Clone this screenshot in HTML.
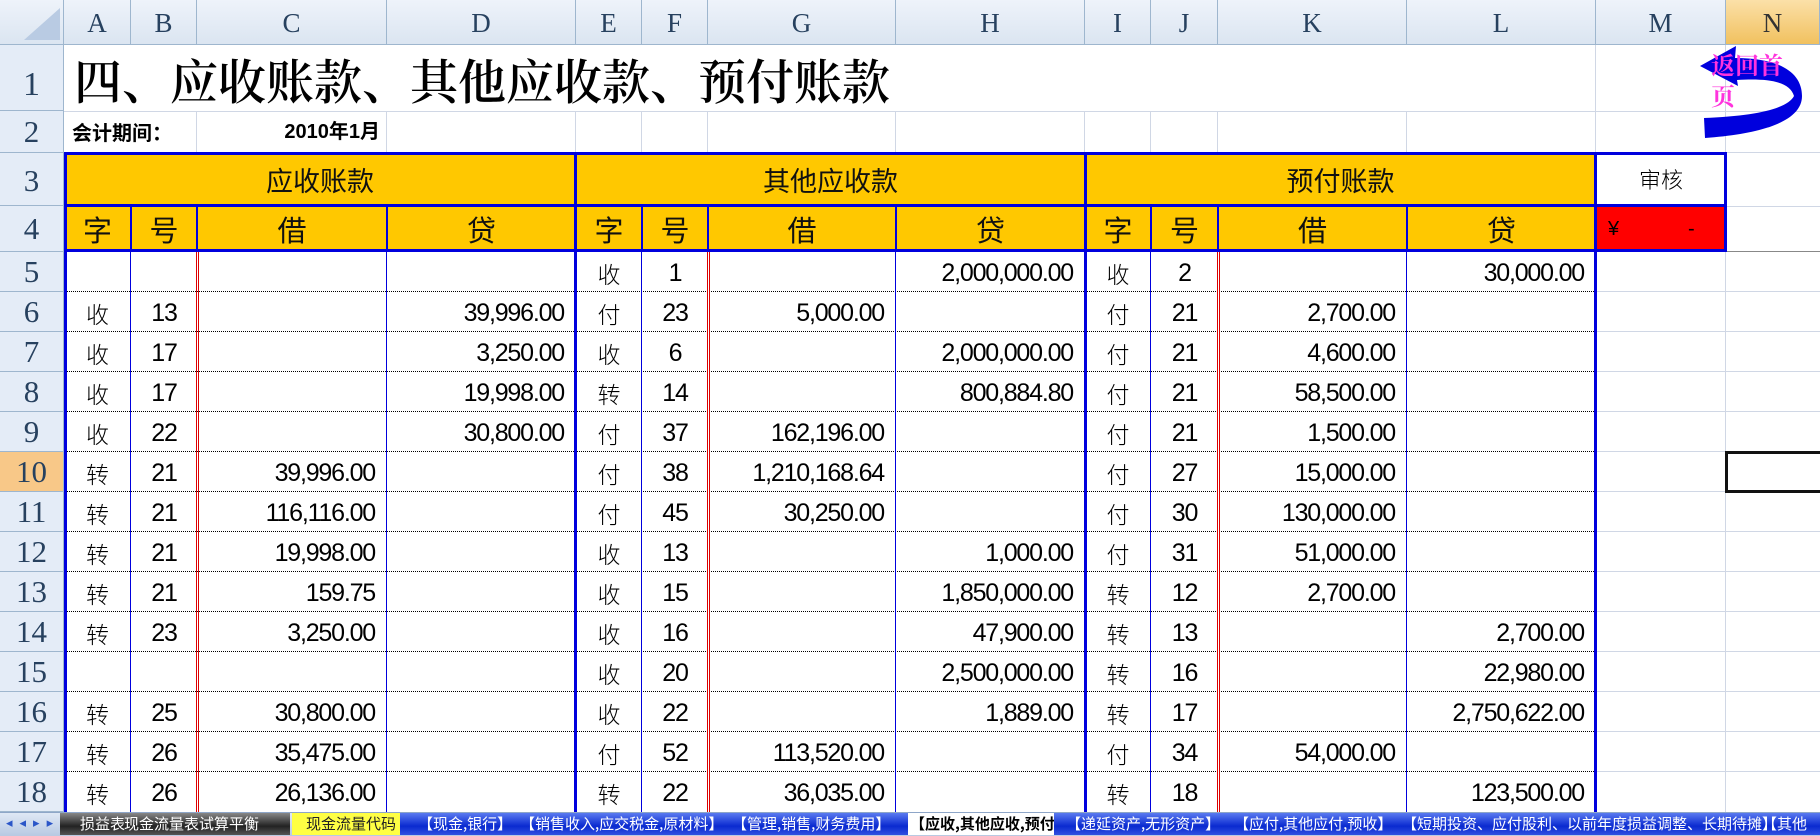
<!DOCTYPE html>
<html><head><meta charset="utf-8"><style>
*{margin:0;padding:0;box-sizing:border-box}
body{width:1820px;height:836px;overflow:hidden;background:#fff;position:relative;font-family:"Liberation Sans","Noto Sans CJK SC",sans-serif}
.a{position:absolute}
.ch{position:absolute;top:0;height:45px;background:linear-gradient(#eef3fa,#dbe5f1);border-right:1px solid #9eb6ce;border-bottom:1px solid #9eb6ce;font-family:"Liberation Serif",serif;font-size:27px;color:#27415f;text-align:center;line-height:47px}
.rh{position:absolute;left:0;width:64px;background:#e4ecf7;border-bottom:1px solid #9eb6ce;border-right:1px solid #9eb6ce;font-family:"Liberation Serif",serif;font-size:31px;color:#27415f;text-align:center}
.gv{position:absolute;width:1px;background:#d0d7e5}
.gh{position:absolute;height:1px;background:#d0d7e5}
.bt{position:absolute;background:#0000dd}
.dot{position:absolute;left:64px;width:1532px;height:0;border-top:1px dotted #000}
.dt{position:absolute;left:64px;top:252px;width:1532px}
.r{position:relative;height:40px;display:flex}
.r div{height:40px;line-height:42px;overflow:hidden;white-space:nowrap}
.c{text-align:center;font-family:"Noto Sans CJK SC",sans-serif;font-size:23px;font-weight:300}
.b{text-align:center;font-family:"Liberation Sans",sans-serif;font-size:25px;letter-spacing:-1.2px}
.n{text-align:right;padding-right:12px;font-family:"Liberation Sans",sans-serif;font-size:25px;letter-spacing:-1.2px}
.w1{width:67px}.w2{width:66px}.w3{width:190px}.w4{width:189px}.w7{width:188px}
.hd{position:absolute;background:#ffc800;text-align:center;font-family:"Noto Sans CJK SC",sans-serif;color:#111}
.tab{position:absolute;top:813px;height:21px;font-size:15px;line-height:21px;white-space:nowrap;font-family:"Noto Sans CJK SC",sans-serif}
</style></head><body>

<div class="ch" style="left:0;width:64px;background:linear-gradient(#eef3fa,#dbe5f1)"></div>
<svg class="a" style="left:20px;top:6px" width="42" height="36"><polygon points="40,2 40,34 4,34" fill="#b9cbe3"/></svg>
<div class="ch" style="left:64px;width:67px">A</div>
<div class="ch" style="left:131px;width:66px">B</div>
<div class="ch" style="left:197px;width:190px">C</div>
<div class="ch" style="left:387px;width:189px">D</div>
<div class="ch" style="left:576px;width:66px">E</div>
<div class="ch" style="left:642px;width:66px">F</div>
<div class="ch" style="left:708px;width:188px">G</div>
<div class="ch" style="left:896px;width:189px">H</div>
<div class="ch" style="left:1085px;width:66px">I</div>
<div class="ch" style="left:1151px;width:67px">J</div>
<div class="ch" style="left:1218px;width:189px">K</div>
<div class="ch" style="left:1407px;width:189px">L</div>
<div class="ch" style="left:1596px;width:130px">M</div>
<div class="ch" style="left:1726px;width:94px;background:linear-gradient(#fbe0a8,#f1c15f);color:#333">N</div>

<div class="rh" style="top:45px;height:66px;line-height:80px;font-size:34px">1</div>
<div class="rh" style="top:111px;height:42px;line-height:42px">2</div>
<div class="rh" style="top:153px;height:53px;line-height:55px">3</div>
<div class="rh" style="top:206px;height:46px;line-height:46px">4</div>
<div class="rh" style="top:252px;height:40px;line-height:40px">5</div>
<div class="rh" style="top:292px;height:40px;line-height:40px">6</div>
<div class="rh" style="top:332px;height:40px;line-height:40px">7</div>
<div class="rh" style="top:372px;height:40px;line-height:40px">8</div>
<div class="rh" style="top:412px;height:40px;line-height:40px">9</div>
<div class="rh" style="top:452px;height:40px;line-height:40px;background:#f8c888">10</div>
<div class="rh" style="top:492px;height:40px;line-height:40px">11</div>
<div class="rh" style="top:532px;height:40px;line-height:40px">12</div>
<div class="rh" style="top:572px;height:40px;line-height:40px">13</div>
<div class="rh" style="top:612px;height:40px;line-height:40px">14</div>
<div class="rh" style="top:652px;height:40px;line-height:40px">15</div>
<div class="rh" style="top:692px;height:40px;line-height:40px">16</div>
<div class="rh" style="top:732px;height:40px;line-height:40px">17</div>
<div class="rh" style="top:772px;height:40px;line-height:40px">18</div>

<div class="gh" style="left:64px;top:111px;width:1756px"></div>
<div class="gh" style="left:64px;top:152px;width:1756px"></div>
<div class="gv" style="left:1595px;top:45px;height:108px"></div>
<div class="gv" style="left:1725px;top:45px;height:767px"></div>
<div class="gv" style="left:196px;top:111px;height:42px"></div>
<div class="gv" style="left:386px;top:111px;height:42px"></div>
<div class="gv" style="left:575px;top:111px;height:42px"></div>
<div class="gv" style="left:641px;top:111px;height:42px"></div>
<div class="gv" style="left:707px;top:111px;height:42px"></div>
<div class="gv" style="left:895px;top:111px;height:42px"></div>
<div class="gv" style="left:1084px;top:111px;height:42px"></div>
<div class="gv" style="left:1150px;top:111px;height:42px"></div>
<div class="gv" style="left:1217px;top:111px;height:42px"></div>
<div class="gv" style="left:1406px;top:111px;height:42px"></div>
<div class="gh" style="left:1726px;top:206px;width:94px"></div>
<div class="gh" style="left:1726px;top:251px;width:94px;background:#888"></div>
<div class="gh" style="left:1596px;top:291px;width:224px"></div>
<div class="gh" style="left:1596px;top:331px;width:224px"></div>
<div class="gh" style="left:1596px;top:371px;width:224px"></div>
<div class="gh" style="left:1596px;top:411px;width:224px"></div>
<div class="gh" style="left:1596px;top:451px;width:224px"></div>
<div class="gh" style="left:1596px;top:491px;width:224px"></div>
<div class="gh" style="left:1596px;top:531px;width:224px"></div>
<div class="gh" style="left:1596px;top:571px;width:224px"></div>
<div class="gh" style="left:1596px;top:611px;width:224px"></div>
<div class="gh" style="left:1596px;top:651px;width:224px"></div>
<div class="gh" style="left:1596px;top:691px;width:224px"></div>
<div class="gh" style="left:1596px;top:731px;width:224px"></div>
<div class="gh" style="left:1596px;top:771px;width:224px"></div>

<div class="a" style="left:74px;top:46px;font-family:'Noto Serif CJK SC',serif;font-weight:600;font-size:48px;line-height:66px;white-space:nowrap">四、应收账款、其他应收款、预付账款</div>
<div class="a" style="left:72px;top:116px;font-family:'Noto Sans CJK SC',sans-serif;font-weight:700;font-size:20px;line-height:32px">会计期间：</div>
<div class="a" style="left:200px;top:116px;width:180px;text-align:right;font-family:'Liberation Sans','Noto Sans CJK SC',sans-serif;font-weight:700;font-size:20px;line-height:32px">2010年1月</div>

<svg class="a" style="left:0;top:0" width="1820" height="160">
<path d="M1700,66 L1736,46 L1735,58 C1782,58 1802,74 1802,96 C1802,122 1760,134 1705,138 L1704,118 C1758,116 1788,108 1794,96 C1790,82 1770,78 1737,80 L1738,86 Z" fill="#0000dd"/>
</svg>
<div class="a" style="left:1711px;top:48px;width:95px;font-family:'Noto Serif CJK SC',serif;font-weight:700;font-size:24px;line-height:31px;color:#ff33dd">返回首<br>页</div>

<div class="hd" style="left:64px;top:153px;width:512px;height:53px;font-size:27px;line-height:53px">应收账款</div>
<div class="hd" style="left:576px;top:153px;width:509px;height:53px;font-size:27px;line-height:53px">其他应收款</div>
<div class="hd" style="left:1085px;top:153px;width:511px;height:53px;font-size:27px;line-height:53px">预付账款</div>
<div class="a" style="left:1596px;top:153px;width:130px;height:53px;text-align:center;font-family:'Noto Sans CJK SC',sans-serif;font-size:22px;line-height:53px;font-weight:300">审核</div>
<div class="hd" style="left:64px;top:206px;width:67px;height:46px;font-size:29px;line-height:46px">字</div>
<div class="hd" style="left:131px;top:206px;width:66px;height:46px;font-size:29px;line-height:46px">号</div>
<div class="hd" style="left:197px;top:206px;width:190px;height:46px;font-size:29px;line-height:46px">借</div>
<div class="hd" style="left:387px;top:206px;width:189px;height:46px;font-size:29px;line-height:46px">贷</div>
<div class="hd" style="left:576px;top:206px;width:66px;height:46px;font-size:29px;line-height:46px">字</div>
<div class="hd" style="left:642px;top:206px;width:66px;height:46px;font-size:29px;line-height:46px">号</div>
<div class="hd" style="left:708px;top:206px;width:188px;height:46px;font-size:29px;line-height:46px">借</div>
<div class="hd" style="left:896px;top:206px;width:189px;height:46px;font-size:29px;line-height:46px">贷</div>
<div class="hd" style="left:1085px;top:206px;width:66px;height:46px;font-size:29px;line-height:46px">字</div>
<div class="hd" style="left:1151px;top:206px;width:67px;height:46px;font-size:29px;line-height:46px">号</div>
<div class="hd" style="left:1218px;top:206px;width:189px;height:46px;font-size:29px;line-height:46px">借</div>
<div class="hd" style="left:1407px;top:206px;width:189px;height:46px;font-size:29px;line-height:46px">贷</div>
<div class="a" style="left:1596px;top:206px;width:130px;height:46px;background:#ff0000;font-size:20px;line-height:46px"><span style="position:absolute;left:12px">¥</span><span style="position:absolute;left:92px">-</span></div>

<div class="dot" style="top:291px"></div><div class="dot" style="top:331px"></div><div class="dot" style="top:371px"></div>
<div class="dot" style="top:411px"></div><div class="dot" style="top:451px"></div><div class="dot" style="top:491px"></div>
<div class="dot" style="top:531px"></div><div class="dot" style="top:571px"></div><div class="dot" style="top:611px"></div>
<div class="dot" style="top:651px"></div><div class="dot" style="top:691px"></div><div class="dot" style="top:731px"></div>
<div class="dot" style="top:771px"></div>

<div class="bt" style="left:130px;top:206px;width:1px;height:606px"></div>
<div class="bt" style="left:386px;top:206px;width:1px;height:606px"></div>
<div class="bt" style="left:641px;top:206px;width:1px;height:606px"></div>
<div class="bt" style="left:895px;top:206px;width:1px;height:606px"></div>
<div class="bt" style="left:1150px;top:206px;width:1px;height:606px"></div>
<div class="bt" style="left:1406px;top:206px;width:1px;height:606px"></div>
<div class="bt" style="left:196px;top:206px;width:2px;height:46px"></div>
<div class="bt" style="left:707px;top:206px;width:2px;height:46px"></div>
<div class="bt" style="left:1217px;top:206px;width:2px;height:46px"></div>
<div class="bt" style="left:130px;top:206px;width:2px;height:46px"></div>
<div class="bt" style="left:386px;top:206px;width:2px;height:46px"></div>
<div class="bt" style="left:641px;top:206px;width:2px;height:46px"></div>
<div class="bt" style="left:895px;top:206px;width:2px;height:46px"></div>
<div class="bt" style="left:1150px;top:206px;width:2px;height:46px"></div>
<div class="bt" style="left:1406px;top:206px;width:2px;height:46px"></div>
<div class="a" style="left:196px;top:252px;width:3px;height:560px;border-left:1px solid #d00;border-right:1px solid #d00"></div>
<div class="a" style="left:707px;top:252px;width:3px;height:560px;border-left:1px solid #d00;border-right:1px solid #d00"></div>
<div class="a" style="left:1217px;top:252px;width:3px;height:560px;border-left:1px solid #d00;border-right:1px solid #d00"></div>

<div class="bt" style="left:64px;top:152px;width:1663px;height:3px"></div>
<div class="bt" style="left:64px;top:204px;width:1663px;height:3px"></div>
<div class="bt" style="left:64px;top:249px;width:1663px;height:3px"></div>
<div class="bt" style="left:64px;top:152px;width:3px;height:660px"></div>
<div class="bt" style="left:574px;top:152px;width:3px;height:660px"></div>
<div class="bt" style="left:1084px;top:152px;width:3px;height:660px"></div>
<div class="bt" style="left:1594px;top:152px;width:3px;height:660px"></div>
<div class="bt" style="left:1724px;top:152px;width:3px;height:100px"></div>

<div class="a" style="left:1725px;top:451px;width:100px;height:42px;border:3px solid #111"></div>

<div class="dt">
<div class="r"><div class="c w1"></div><div class="b w2"></div><div class="n w3"></div><div class="n w4"></div><div class="c w2">收</div><div class="b w2">1</div><div class="n w7"></div><div class="n w4">2,000,000.00</div><div class="c w2">收</div><div class="b w1">2</div><div class="n w4"></div><div class="n w4">30,000.00</div></div>
<div class="r"><div class="c w1">收</div><div class="b w2">13</div><div class="n w3"></div><div class="n w4">39,996.00</div><div class="c w2">付</div><div class="b w2">23</div><div class="n w7">5,000.00</div><div class="n w4"></div><div class="c w2">付</div><div class="b w1">21</div><div class="n w4">2,700.00</div><div class="n w4"></div></div>
<div class="r"><div class="c w1">收</div><div class="b w2">17</div><div class="n w3"></div><div class="n w4">3,250.00</div><div class="c w2">收</div><div class="b w2">6</div><div class="n w7"></div><div class="n w4">2,000,000.00</div><div class="c w2">付</div><div class="b w1">21</div><div class="n w4">4,600.00</div><div class="n w4"></div></div>
<div class="r"><div class="c w1">收</div><div class="b w2">17</div><div class="n w3"></div><div class="n w4">19,998.00</div><div class="c w2">转</div><div class="b w2">14</div><div class="n w7"></div><div class="n w4">800,884.80</div><div class="c w2">付</div><div class="b w1">21</div><div class="n w4">58,500.00</div><div class="n w4"></div></div>
<div class="r"><div class="c w1">收</div><div class="b w2">22</div><div class="n w3"></div><div class="n w4">30,800.00</div><div class="c w2">付</div><div class="b w2">37</div><div class="n w7">162,196.00</div><div class="n w4"></div><div class="c w2">付</div><div class="b w1">21</div><div class="n w4">1,500.00</div><div class="n w4"></div></div>
<div class="r"><div class="c w1">转</div><div class="b w2">21</div><div class="n w3">39,996.00</div><div class="n w4"></div><div class="c w2">付</div><div class="b w2">38</div><div class="n w7">1,210,168.64</div><div class="n w4"></div><div class="c w2">付</div><div class="b w1">27</div><div class="n w4">15,000.00</div><div class="n w4"></div></div>
<div class="r"><div class="c w1">转</div><div class="b w2">21</div><div class="n w3">116,116.00</div><div class="n w4"></div><div class="c w2">付</div><div class="b w2">45</div><div class="n w7">30,250.00</div><div class="n w4"></div><div class="c w2">付</div><div class="b w1">30</div><div class="n w4">130,000.00</div><div class="n w4"></div></div>
<div class="r"><div class="c w1">转</div><div class="b w2">21</div><div class="n w3">19,998.00</div><div class="n w4"></div><div class="c w2">收</div><div class="b w2">13</div><div class="n w7"></div><div class="n w4">1,000.00</div><div class="c w2">付</div><div class="b w1">31</div><div class="n w4">51,000.00</div><div class="n w4"></div></div>
<div class="r"><div class="c w1">转</div><div class="b w2">21</div><div class="n w3">159.75</div><div class="n w4"></div><div class="c w2">收</div><div class="b w2">15</div><div class="n w7"></div><div class="n w4">1,850,000.00</div><div class="c w2">转</div><div class="b w1">12</div><div class="n w4">2,700.00</div><div class="n w4"></div></div>
<div class="r"><div class="c w1">转</div><div class="b w2">23</div><div class="n w3">3,250.00</div><div class="n w4"></div><div class="c w2">收</div><div class="b w2">16</div><div class="n w7"></div><div class="n w4">47,900.00</div><div class="c w2">转</div><div class="b w1">13</div><div class="n w4"></div><div class="n w4">2,700.00</div></div>
<div class="r"><div class="c w1"></div><div class="b w2"></div><div class="n w3"></div><div class="n w4"></div><div class="c w2">收</div><div class="b w2">20</div><div class="n w7"></div><div class="n w4">2,500,000.00</div><div class="c w2">转</div><div class="b w1">16</div><div class="n w4"></div><div class="n w4">22,980.00</div></div>
<div class="r"><div class="c w1">转</div><div class="b w2">25</div><div class="n w3">30,800.00</div><div class="n w4"></div><div class="c w2">收</div><div class="b w2">22</div><div class="n w7"></div><div class="n w4">1,889.00</div><div class="c w2">转</div><div class="b w1">17</div><div class="n w4"></div><div class="n w4">2,750,622.00</div></div>
<div class="r"><div class="c w1">转</div><div class="b w2">26</div><div class="n w3">35,475.00</div><div class="n w4"></div><div class="c w2">付</div><div class="b w2">52</div><div class="n w7">113,520.00</div><div class="n w4"></div><div class="c w2">付</div><div class="b w1">34</div><div class="n w4">54,000.00</div><div class="n w4"></div></div>
<div class="r"><div class="c w1">转</div><div class="b w2">26</div><div class="n w3">26,136.00</div><div class="n w4"></div><div class="c w2">转</div><div class="b w2">22</div><div class="n w7">36,035.00</div><div class="n w4"></div><div class="c w2">转</div><div class="b w1">18</div><div class="n w4"></div><div class="n w4">123,500.00</div></div>
</div>

<div class="a" style="left:0;top:812px;width:1820px;height:24px;background:linear-gradient(#dfe8f5,#b8c9e2);border-top:1px solid #8ea6c8"></div>
<div class="a" style="left:6px;top:815px;font-size:13px;color:#2b56c8;letter-spacing:7px">◂◂▸▸</div>
<div class="a" style="left:60px;top:813px;width:230px;height:22px;background:linear-gradient(#888,#222 60%,#555)"></div>
<div class="tab" style="left:80px;color:#fff">损益表</div>
<div class="tab" style="left:124px;color:#fff">现金流量表</div>
<div class="tab" style="left:199px;color:#fff">试算平衡</div>
<div class="a" style="left:292px;top:813px;width:108px;height:22px;background:#ffff44"></div>
<div class="tab" style="left:306px;color:#222">现金流量代码</div>
<div class="a" style="left:400px;top:813px;width:510px;height:22px;background:linear-gradient(#5a7af0,#0a2ad0 60%,#3050e0)"></div>
<div class="tab" style="left:418px;color:#fff">【现金,银行】</div>
<div class="tab" style="left:520px;color:#fff">【销售收入,应交税金,原材料】</div>
<div class="tab" style="left:732px;color:#fff">【管理,销售,财务费用】</div>
<div class="a" style="left:908px;top:813px;width:146px;height:22px;background:#fff"></div>
<div class="tab" style="left:910px;color:#000;font-weight:700">【应收,其他应收,预付】</div>
<div class="a" style="left:1054px;top:813px;width:766px;height:22px;background:linear-gradient(#5a7af0,#0a2ad0 60%,#3050e0)"></div>
<div class="tab" style="left:1066px;color:#fff">【递延资产,无形资产】</div>
<div class="tab" style="left:1234px;color:#fff">【应付,其他应付,预收】</div>
<div class="tab" style="left:1402px;color:#fff">【短期投资、应付股利、以前年度损益调整、长期待摊】</div>
<div class="tab" style="left:1762px;color:#fff">【其他</div>
</body></html>
